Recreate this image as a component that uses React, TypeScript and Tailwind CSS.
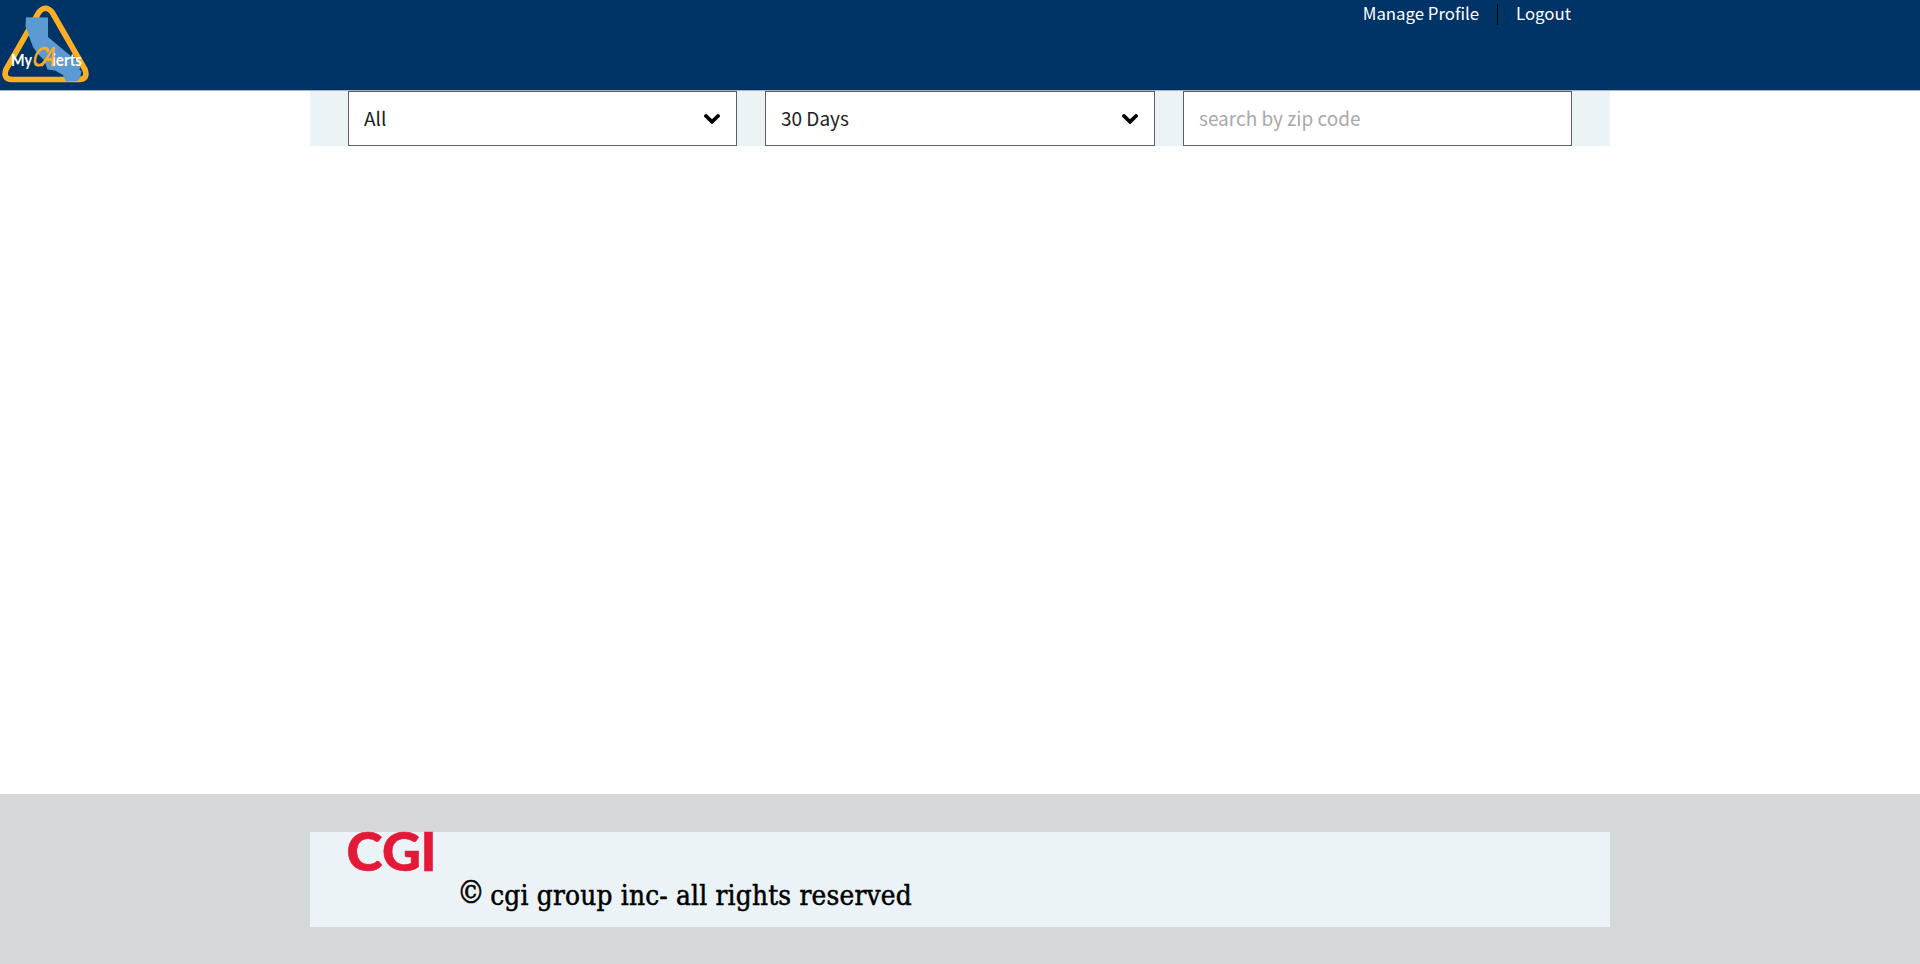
import React from "react";

const sans = "font-['Noto_Sans_CJK_SC','Open_Sans',sans-serif]";

function AlertsLogo() {
  return (
    <svg width="90" height="90" viewBox="0 0 90 90" className="block shrink-0" role="img" aria-label="My CA Alerts">
      <path
        d="M39 12 Q45.500 4.500 52 12 L85 69.500 Q88.500 79 79 79.500 H12 Q2.500 79 6 69.500 Z"
        fill="none"
        stroke="#fdae22"
        strokeWidth="5.600"
        strokeLinejoin="round"
      />
      <path
        d="M26 17.300 L48 17.500 V37 L72 57 L80.500 65 L79.500 70 L81.500 71 L80 78 L77.500 81 L66 81.500 L63 75 L55 70.500 L47.500 69.500 L44 60 L38 54 L33 47 L30 39 L28 33 L25.500 26 Z"
        fill="#5b9bd1"
      />
      <g fontFamily="Lato, sans-serif" fontWeight="700" fill="#ffffff">
        <text x="11" y="65.500" fontSize="17" textLength="21" lengthAdjust="spacingAndGlyphs">My</text>
        <text x="52" y="65.500" fontSize="17" textLength="30" lengthAdjust="spacingAndGlyphs">ierts</text>
      </g>
      <g
        fontFamily="Liberation Sans, sans-serif"
        fontStyle="italic"
        fontSize="27"
        fill="#fdae22"
        stroke="#fdae22"
        strokeWidth="0.700"
      >
        <text transform="translate(31.500 66) skewX(-12)" textLength="14" lengthAdjust="spacingAndGlyphs">C</text>
        <text transform="translate(41.500 65.500) skewX(-12)" textLength="12.500" lengthAdjust="spacingAndGlyphs">A</text>
      </g>
    </svg>
  );
}

function CgiLogo() {
  return (
    <svg width="86" height="40" viewBox="0 0 86 40" className="block shrink-0 overflow-visible" role="img" aria-label="CGI">
      <g fontFamily="Lato, sans-serif" fontWeight="900" fontSize="53" fill="#e31937" stroke="#e31937" strokeWidth="0.600">
        <text x="-1.500" y="38.500" textLength="36" lengthAdjust="spacingAndGlyphs">C</text>
        <text x="34" y="38.500" textLength="39" lengthAdjust="spacingAndGlyphs">G</text>
        <text x="72.500" y="38.500" textLength="16" lengthAdjust="spacingAndGlyphs">I</text>
      </g>
    </svg>
  );
}

function Chevron() {
  return (
    <svg width="16" height="10" viewBox="0 0 16 10" className="block">
      <path d="M2 2 L8 7.800 L14 2" fill="none" stroke="#000" strokeWidth="3.800" strokeLinecap="round" />
    </svg>
  );
}

function Select({ value }: { value: string }) {
  return (
    <button
      type="button"
      className="flex h-[55px] items-center justify-between border border-[#5b616b] bg-white pl-[15px] pr-4 text-left text-[#212121]"
    >
      <span className="pb-0.5 text-[19px] leading-none">{value}</span>
      <Chevron />
    </button>
  );
}

export default function App() {
  return (
    <div className={`flex h-[964px] flex-col bg-white ${sans}`}>
      <header className="flex h-[91px] shrink-0 justify-between border-b border-[#aeb0b5] bg-[#003366]">
        <AlertsLogo />
        <nav className="mr-[349px] mt-1 flex h-[21px] items-center text-[16.800px] leading-[21px] text-white">
          <a href="#profile" className="-mt-0.5 pr-[18px]">Manage Profile</a>
          <span className="h-[21px] w-px bg-black" />
          <a href="#logout" className="-mt-0.5 pl-[18px]">Logout</a>
        </nav>
      </header>
      <main className="flex-1">
        <div className="mx-auto grid w-[1300px] grid-cols-[389px_390px_389px] gap-7 bg-[#ebf3f7] px-[38px]">
          <Select value="All" />
          <Select value="30 Days" />
          <input
            type="text"
            placeholder="search by zip code"
            className="h-[55px] min-w-0 border border-[#5b616b] bg-white px-[15px] pb-0.5 text-[19px] placeholder:text-[#a9a9a9]"
          />
        </div>
      </main>
      <footer className="h-[170px] shrink-0 bg-[#d6d7d9] pt-[38px]">
        <div className="mx-auto flex h-[95px] w-[1300px] bg-[#ebf3f7] px-[38px]">
          <CgiLogo />
          <p className="ml-[23px] mt-[45px] flex whitespace-pre font-['DejaVu_Serif_Condensed','DejaVu_Serif',serif] text-[27.700px] leading-[38px] tracking-[0.2px] text-black [font-stretch:condensed] [-webkit-text-stroke:0.5px_#000]">
            <span className="-mt-1 -mr-[3px] text-[31px]">©</span>
            <span> cgi group inc- all rights reserved</span>
          </p>
        </div>
      </footer>
    </div>
  );
}
